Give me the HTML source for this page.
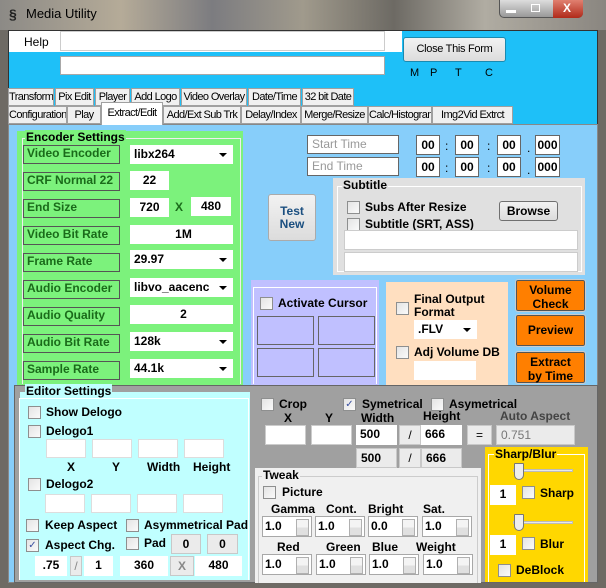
<!DOCTYPE html>
<html><head><meta charset="utf-8"><style>
*{box-sizing:border-box}
body{margin:0;width:606px;height:588px;overflow:hidden;font-family:"Liberation Sans",sans-serif;font-size:12px;background:#6e6a64;position:relative}
div{position:absolute}
.t{white-space:nowrap}
.b{font-weight:bold}
.tb{background:#fff;border:1px solid #a8a8a8}
.tab{border:1px solid #a0a0a0;background:#f0f0f0;height:18px;font-size:11px;line-height:16px;text-align:center;letter-spacing:-0.6px;white-space:nowrap;overflow:hidden}
.lab{border:1px solid #555;background:#7cf27c;color:#1a6b1a;font-weight:bold;font-size:12px;line-height:15px;padding-left:3px;height:19px;width:97px;left:23px;white-space:nowrap}
.in{background:#fff;font-weight:bold;font-size:12px;line-height:19px;height:19px;padding-left:4px}
.dd::after{content:"";position:absolute;right:6px;top:8px;border-left:4px solid transparent;border-right:4px solid transparent;border-top:4px solid #000}
.cb{width:13px;height:13px;border:1px solid #8e8f8f;background:linear-gradient(135deg,#e4e4e4,#fafafa)}
.btn{border:1px solid #707070;border-radius:3px;background:linear-gradient(#f2f2f2,#dcdcdc);text-align:center}
.og{background:#ff7f00;border:1px solid #555;border-radius:2px;font-weight:bold;text-align:center;line-height:14px;outline:1px solid #ccc}
.sp{height:21px;width:50px;background:#fff;border:1px solid #a8a8a8;font-weight:bold;font-size:12px;line-height:19px;padding-left:2px}
.sp::after{content:"";position:absolute;right:2px;top:2px;width:11px;height:15px;border:1px solid #b0b0b0;background:linear-gradient(#f4f4f4 50%,#e0e0e0 50%)}
.gr{background:#ebebeb;border:1px solid #c8c8c8;text-align:center;line-height:19px}
</style></head><body>
<div style="left:0;top:0;width:606px;height:30px;background:linear-gradient(90deg,#8c8a86,#b5ab98 20%,#7c7c80 35%,#a09a8c 50%,#6d6a64 65%,#b0aca2 80%,#8a8680)"></div>
<div class="t b" style="left:9px;top:6px;font-size:14px;color:#222">§</div>
<div class="t" style="left:26px;top:6px;font-size:13px;color:#000">Media Utility</div>
<div style="left:499px;top:0;width:84px;height:18px;border:1px solid #555;border-top:none;border-radius:0 0 5px 5px;background:linear-gradient(#ddd,#999)"></div>
<div style="left:553px;top:0;width:30px;height:18px;background:linear-gradient(#e08070,#b02a1a);border-radius:0 0 5px 0"></div>
<div class="t b" style="left:563px;top:1px;color:#fff;font-size:12px">X</div>
<div style="left:506px;top:10px;width:10px;height:3px;background:#fff"></div>
<div style="left:531px;top:4px;width:9px;height:8px;border:1px solid #fff"></div>
<div style="left:8px;top:30px;width:590px;height:553px;background:#1ec0f8;border:1px solid #333"></div>
<div style="left:9px;top:31px;width:393px;height:21px;background:#fff"></div>
<div class="t" style="left:24px;top:35px;font-size:12px">Help</div>
<div class="tb" style="left:60px;top:31px;width:325px;height:20px;border-color:#ccc"></div>
<div class="tb" style="left:60px;top:56px;width:325px;height:19px"></div>
<div class="btn" style="left:403px;top:37px;width:103px;height:25px;line-height:23px;font-size:11px;letter-spacing:-0.3px;border-color:#1a8ab0">Close This Form</div>
<div class="t" style="left:410px;top:67px;font-size:11px">M</div>
<div class="t" style="left:430px;top:67px;font-size:11px">P</div>
<div class="t" style="left:455px;top:67px;font-size:11px">T</div>
<div class="t" style="left:485px;top:67px;font-size:11px">C</div>
<div class="tab" style="left:8px;top:88px;width:46px">Transform</div>
<div class="tab" style="left:55px;top:88px;width:39px">Pix Edit</div>
<div class="tab" style="left:95px;top:88px;width:35px">Player</div>
<div class="tab" style="left:131px;top:88px;width:49px">Add Logo</div>
<div class="tab" style="left:181px;top:88px;width:66px">Video Overlay</div>
<div class="tab" style="left:248px;top:88px;width:53px">Date/Time</div>
<div class="tab" style="left:302px;top:88px;width:52px">32 bit Date</div>
<div class="tab" style="left:8px;top:106px;width:59px">Configuration</div>
<div class="tab" style="left:67px;top:106px;width:34px">Play</div>
<div class="tab" style="left:163px;top:106px;width:78px">Add/Ext Sub Trk</div>
<div class="tab" style="left:241px;top:106px;width:60px">Delay/Index</div>
<div class="tab" style="left:301px;top:106px;width:67px">Merge/Resize</div>
<div class="tab" style="left:368px;top:106px;width:64px">Calc/Histogram</div>
<div class="tab" style="left:432px;top:106px;width:81px">Img2Vid Extrct</div>
<div style="left:8px;top:124px;width:590px;height:459px;background:#87cefa;border:1px solid #888"></div>
<div class="tab" style="left:101px;top:102px;width:62px;height:23px;background:#fff;border-bottom:none;line-height:20px">Extract/Edit</div>
<div style="left:17px;top:131px;width:226px;height:254px;background:#7cf27c"></div>
<div style="left:22px;top:138px;width:219px;height:246px;border:1px solid #eee;border-bottom:none"></div>
<div class="t b" style="left:25px;top:130px;background:#7cf27c;padding:0 1px;font-size:12px">Encoder Settings</div>
<div class="lab" style="top:145px">Video Encoder</div>
<div class="lab" style="top:172px">CRF Normal 22</div>
<div class="lab" style="top:199px">End Size</div>
<div class="lab" style="top:226px">Video Bit Rate</div>
<div class="lab" style="top:253px">Frame Rate</div>
<div class="lab" style="top:280px">Audio Encoder</div>
<div class="lab" style="top:307px">Audio Quality</div>
<div class="lab" style="top:334px">Audio Bit Rate</div>
<div class="lab" style="top:361px">Sample Rate</div>
<div class="in dd" style="left:130px;top:145px;width:103px">libx264</div>
<div class="in" style="left:130px;top:171px;width:39px;text-align:center;padding:0">22</div>
<div class="in" style="left:130px;top:198px;width:39px;text-align:center;padding:0">720</div>
<div class="t b" style="left:175px;top:200px;color:#1a6b1a">X</div>
<div class="in" style="left:191px;top:197px;width:40px;text-align:center;padding:0">480</div>
<div class="in" style="left:130px;top:225px;width:103px;text-align:center">1M</div>
<div class="in dd" style="left:130px;top:250px;width:103px">29.97</div>
<div class="in dd" style="left:130px;top:278px;width:103px">libvo_aacenc</div>
<div class="in" style="left:130px;top:305px;width:103px;text-align:center">2</div>
<div class="in dd" style="left:130px;top:332px;width:103px">128k</div>
<div class="in dd" style="left:130px;top:359px;width:103px">44.1k</div>
<div class="tb" style="left:307px;top:135px;width:92px;height:19px;color:#999;padding-left:4px;line-height:16px;border-color:#666">Start Time</div>
<div class="tb" style="left:307px;top:157px;width:92px;height:19px;color:#999;padding-left:4px;line-height:16px;border-color:#666">End Time</div>
<div class="in tb" style="left:416px;top:135px;width:24px;padding:0;text-align:center;height:20px;border-color:#666">00</div>
<div class="in tb" style="left:455px;top:135px;width:24px;padding:0;text-align:center;height:20px;border-color:#666">00</div>
<div class="in tb" style="left:497px;top:135px;width:24px;padding:0;text-align:center;height:20px;border-color:#666">00</div>
<div class="in tb" style="left:535px;top:135px;width:25px;padding:0;text-align:center;height:20px;border-color:#666">000</div>
<div class="in tb" style="left:416px;top:157px;width:24px;padding:0;text-align:center;height:20px;border-color:#666">00</div>
<div class="in tb" style="left:455px;top:157px;width:24px;padding:0;text-align:center;height:20px;border-color:#666">00</div>
<div class="in tb" style="left:497px;top:157px;width:24px;padding:0;text-align:center;height:20px;border-color:#666">00</div>
<div class="in tb" style="left:535px;top:157px;width:25px;padding:0;text-align:center;height:20px;border-color:#666">000</div>
<div class="t" style="left:445px;top:139px">:</div><div class="t" style="left:487px;top:139px">:</div><div class="t" style="left:527px;top:141px">.</div>
<div class="t" style="left:445px;top:161px">:</div><div class="t" style="left:487px;top:161px">:</div><div class="t" style="left:527px;top:163px">.</div>
<div class="btn b" style="left:268px;top:194px;width:48px;height:47px;padding-top:10px;line-height:13px;color:#1b4f80;border-color:#aaa">Test<br>New</div>
<div style="left:333px;top:178px;width:252px;height:97px;background:#e0e0e0"></div>
<div style="left:337px;top:186px;width:245px;height:86px;border:1px solid #fff"></div>
<div class="t b" style="left:342px;top:178px;background:#e0e0e0;padding:0 1px">Subtitle</div>
<div class="cb" style="left:347px;top:201px"></div>
<div class="t b" style="left:365px;top:200px">Subs After Resize</div>
<div class="cb" style="left:347px;top:218px"></div>
<div class="t b" style="left:365px;top:217px">Subtitle (SRT, ASS)</div>
<div class="btn b" style="left:499px;top:201px;width:59px;height:20px;line-height:18px">Browse</div>
<div class="tb" style="left:344px;top:230px;width:234px;height:20px;border-color:#ccc"></div>
<div class="tb" style="left:344px;top:252px;width:234px;height:20px;border-color:#ccc"></div>
<div style="left:251px;top:280px;width:128px;height:105px;background:#c0c0ff"></div>
<div style="left:253px;top:287px;width:124px;height:97px;border:1px solid #fff;border-bottom:none"></div>
<div class="cb" style="left:260px;top:297px"></div>
<div class="t b" style="left:278px;top:296px">Activate Cursor</div>
<div style="left:257px;top:316px;width:57px;height:29px;border:1px solid #666"></div>
<div style="left:318px;top:316px;width:57px;height:29px;border:1px solid #666"></div>
<div style="left:257px;top:348px;width:57px;height:29px;border:1px solid #666"></div>
<div style="left:318px;top:348px;width:57px;height:29px;border:1px solid #666"></div>
<div style="left:386px;top:282px;width:122px;height:103px;background:#ffdfc0"></div>
<div class="cb" style="left:396px;top:302px"></div>
<div class="b" style="left:414px;top:293px;line-height:13px">Final Output<br>Format</div>
<div class="in dd" style="left:414px;top:320px;width:63px;font-weight:bold">.FLV</div>
<div class="cb" style="left:396px;top:346px"></div>
<div class="t b" style="left:414px;top:345px">Adj Volume DB</div>
<div class="in" style="left:414px;top:361px;width:62px"></div>
<div class="og" style="left:516px;top:280px;width:69px;height:31px;padding-top:2px">Volume<br>Check</div>
<div class="og" style="left:516px;top:315px;width:69px;height:31px;line-height:29px">Preview</div>
<div class="og" style="left:516px;top:352px;width:69px;height:31px;padding-top:2px">Extract<br>by Time</div>
<div style="left:14px;top:385px;width:584px;height:198px;background:#a0a0a0;border:1px solid #666"></div>
<div style="left:20px;top:392px;width:230px;height:188px;background:#c0ffff"></div>
<div style="left:19px;top:398px;width:230px;height:182px;border:1px solid #fff;border-bottom:none"></div>
<div class="t b" style="left:25px;top:384px;background:#c0ffff;padding:0 1px;height:14px;line-height:14px;overflow:hidden">Editor Settings</div>
<div class="cb" style="left:28px;top:406px"></div><div class="t b" style="left:46px;top:405px">Show Delogo</div>
<div class="cb" style="left:28px;top:425px"></div><div class="t b" style="left:46px;top:424px">Delogo1</div>
<div class="tb" style="left:46px;top:439px;width:40px;height:19px;border-color:#ddd"></div>
<div class="tb" style="left:92px;top:439px;width:40px;height:19px;border-color:#ddd"></div>
<div class="tb" style="left:138px;top:439px;width:40px;height:19px;border-color:#ddd"></div>
<div class="tb" style="left:184px;top:439px;width:40px;height:19px;border-color:#ddd"></div>
<div class="t b" style="left:67px;top:460px">X</div>
<div class="t b" style="left:112px;top:460px">Y</div>
<div class="t b" style="left:147px;top:460px">Width</div>
<div class="t b" style="left:193px;top:460px">Height</div>
<div class="cb" style="left:28px;top:478px"></div><div class="t b" style="left:46px;top:477px">Delogo2</div>
<div class="tb" style="left:45px;top:494px;width:40px;height:19px;border-color:#ddd"></div>
<div class="tb" style="left:91px;top:494px;width:40px;height:19px;border-color:#ddd"></div>
<div class="tb" style="left:137px;top:494px;width:40px;height:19px;border-color:#ddd"></div>
<div class="tb" style="left:183px;top:494px;width:40px;height:19px;border-color:#ddd"></div>
<div class="cb" style="left:26px;top:519px"></div><div class="t b" style="left:45px;top:518px">Keep Aspect</div>
<div class="cb" style="left:126px;top:519px"></div><div class="t b" style="left:144px;top:518px">Asymmetrical Pad</div>
<div class="cb" style="left:26px;top:539px;color:#3a50a0;font-size:10px;line-height:11px;text-align:center">✓</div><div class="t b" style="left:45px;top:538px">Aspect Chg.</div>
<div class="cb" style="left:126px;top:537px"></div><div class="t b" style="left:144px;top:536px">Pad</div>
<div class="gr b" style="left:171px;top:534px;width:30px;height:20px">0</div>
<div class="gr b" style="left:207px;top:534px;width:31px;height:20px">0</div>
<div class="in" style="left:35px;top:556px;width:32px;height:20px;text-align:center;padding:0">.75</div>
<div class="gr" style="left:70px;top:556px;width:12px;height:20px;color:#888">/</div>
<div class="in" style="left:84px;top:556px;width:29px;height:20px;text-align:center;padding:0">1</div>
<div class="in" style="left:120px;top:556px;width:48px;height:20px;text-align:center;padding:0">360</div>
<div class="gr b" style="left:170px;top:556px;width:24px;height:20px;color:#888">X</div>
<div class="in" style="left:195px;top:556px;width:47px;height:20px;text-align:center;padding:0">480</div>
<div class="cb" style="left:261px;top:398px"></div><div class="t b" style="left:279px;top:397px">Crop</div>
<div class="t b" style="left:284px;top:411px">X</div>
<div class="t b" style="left:325px;top:411px">Y</div>
<div class="cb" style="left:343px;top:398px;color:#3a50a0;font-size:10px;line-height:11px;text-align:center">✓</div><div class="t b" style="left:362px;top:397px">Symetrical</div>
<div class="cb" style="left:431px;top:398px"></div><div class="t b" style="left:449px;top:397px">Asymetrical</div>
<div class="t b" style="left:361px;top:411px">Width</div>
<div class="t b" style="left:423px;top:409px">Height</div>
<div class="t b" style="left:500px;top:409px;color:#444">Auto Aspect</div>
<div class="tb" style="left:265px;top:425px;width:41px;height:20px;border-color:#ccc"></div>
<div class="tb" style="left:311px;top:425px;width:41px;height:20px;border-color:#ccc"></div>
<div class="in" style="left:356px;top:425px;width:41px;height:20px">500</div>
<div class="gr" style="left:399px;top:425px;width:22px;height:20px">/</div>
<div class="in" style="left:421px;top:425px;width:41px;height:20px">666</div>
<div class="gr" style="left:467px;top:425px;width:25px;height:20px">=</div>
<div class="gr" style="left:496px;top:425px;width:79px;height:20px;text-align:left;padding-left:4px;color:#777">0.751</div>
<div class="gr b" style="left:356px;top:448px;width:41px;height:20px;text-align:left;padding-left:4px">500</div>
<div class="gr" style="left:399px;top:448px;width:22px;height:20px">/</div>
<div class="gr b" style="left:421px;top:448px;width:41px;height:20px;text-align:left;padding-left:4px">666</div>
<div style="left:255px;top:468px;width:226px;height:115px;background:#f0f0f0"></div>
<div style="left:258px;top:476px;width:220px;height:107px;border:1px solid #ccc;border-bottom:none"></div>
<div class="t b" style="left:262px;top:468px;background:#f0f0f0;padding:0 1px">Tweak</div>
<div class="cb" style="left:263px;top:486px"></div><div class="t b" style="left:282px;top:485px">Picture</div>
<div class="t b" style="left:271px;top:502px">Gamma</div>
<div class="t b" style="left:326px;top:502px">Cont.</div>
<div class="t b" style="left:368px;top:502px">Bright</div>
<div class="t b" style="left:423px;top:502px">Sat.</div>
<div class="sp" style="left:262px;top:516px">1.0</div>
<div class="sp" style="left:315px;top:516px">1.0</div>
<div class="sp" style="left:368px;top:516px">0.0</div>
<div class="sp" style="left:422px;top:516px">1.0</div>
<div class="t b" style="left:277px;top:540px">Red</div>
<div class="t b" style="left:326px;top:540px">Green</div>
<div class="t b" style="left:372px;top:540px">Blue</div>
<div class="t b" style="left:416px;top:540px">Weight</div>
<div class="sp" style="left:262px;top:554px">1.0</div>
<div class="sp" style="left:316px;top:554px">1.0</div>
<div class="sp" style="left:369px;top:554px">1.0</div>
<div class="sp" style="left:423px;top:554px">1.0</div>
<div style="left:485px;top:447px;width:103px;height:135px;background:#ffd700"></div>
<div style="left:488px;top:454px;width:97px;height:128px;border:1px solid #fff;border-bottom:none"></div>
<div class="t b" style="left:494px;top:447px;background:#ffd700;padding:0 1px">Sharp/Blur</div>
<div style="left:513px;top:469px;width:60px;height:3px;background:#e8e8e8;border:1px solid #bbb"></div>
<div style="left:514px;top:463px;width:10px;height:17px;background:#eee;border:1px solid #777;border-radius:1px 1px 5px 5px"></div>
<div class="in" style="left:490px;top:485px;width:26px;height:20px;text-align:center;padding:0">1</div>
<div class="cb" style="left:522px;top:486px"></div><div class="t b" style="left:540px;top:486px">Sharp</div>
<div style="left:513px;top:521px;width:60px;height:3px;background:#e8e8e8;border:1px solid #bbb"></div>
<div style="left:514px;top:514px;width:10px;height:17px;background:#eee;border:1px solid #777;border-radius:1px 1px 5px 5px"></div>
<div class="in" style="left:490px;top:535px;width:26px;height:20px;text-align:center;padding:0">1</div>
<div class="cb" style="left:522px;top:537px"></div><div class="t b" style="left:540px;top:537px">Blur</div>
<div class="cb" style="left:498px;top:564px"></div><div class="t b" style="left:516px;top:563px">DeBlock</div>
</body></html>
